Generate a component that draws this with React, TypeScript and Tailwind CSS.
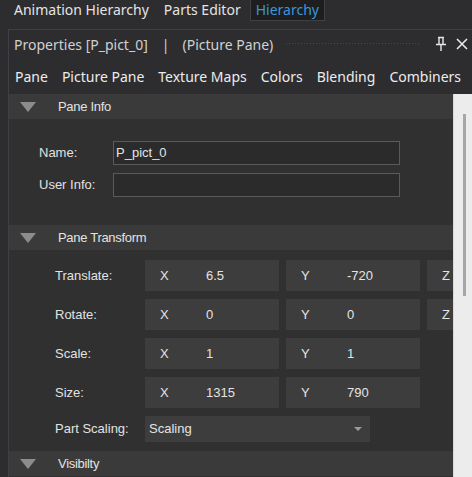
import React from "react";

const ui = "font-['Noto_Sans','Open_Sans',sans-serif]";
const form = "font-['Liberation_Sans',Arial,sans-serif]";

function SectionHeader({ title }: { title: string }) {
  return (
    <div className="flex h-[25px] shrink-0 items-center bg-[#3a3a3a]">
      <svg width="16" height="10" viewBox="0 0 16 10" className="ml-[11px] shrink-0">
        <polygon points="0,0 16,0 8,10" fill="#8c8c8c" />
      </svg>
      <span className={`${form} ml-[22px] text-[13px] tracking-[-0.3px] text-[#e2e2e2]`}>{title}</span>
    </div>
  );
}

function VecBox({ axis, value }: { axis: string; value?: string }) {
  return (
    <div className={`flex h-[31px] w-[134px] shrink-0 items-center bg-[#3d3d3d] ${form} text-[13px] text-[#e4e4e4]`}>
      <span className="ml-[15px] w-[46px]">{axis}</span>
      {value && <span>{value}</span>}
    </div>
  );
}

function VecRow({ label, x, y, z }: { label: string; x: string; y: string; z?: boolean }) {
  return (
    <div className="flex items-center">
      <span className={`${form} w-[90px] shrink-0 text-[13px] text-[#e2e2e2]`}>{label}</span>
      <div className="flex shrink-0 gap-[7px]">
        <VecBox axis="X" value={x} />
        <VecBox axis="Y" value={y} />
        {z && <VecBox axis="Z" />}
      </div>
    </div>
  );
}

export default function App() {
  return (
    <div className={`flex h-[477px] w-[472px] flex-col overflow-hidden bg-[#2d2d30] ${ui}`}>
      {/* document tabs */}
      <div className="flex h-[29px] shrink-0 items-start whitespace-nowrap text-[14px] text-[#e4e4e4]">
        <span className="ml-[14px] mt-[-1px] leading-[22px]">Animation Hierarchy</span>
        <span className="ml-[15px] mt-[-1px] leading-[22px]">Parts Editor</span>
        <div className="ml-[9px] flex h-[21px] items-center border border-t-0 border-[#3f3f46] bg-[#1e1e1e] px-[5px] text-[#3a96dd]">
          <span className="mt-[-2px]">Hierarchy</span>
        </div>
      </div>

      {/* tool window */}
      <div className="ml-[8px] flex min-h-0 flex-1 flex-col border-l border-t border-[#3f3f46] bg-[#2d2d30]">
        <div className="flex h-[28px] shrink-0 items-center whitespace-nowrap text-[14px] text-[#d0d0d0]">
          <span className="ml-[5px] shrink-0">Properties [P_pict_0]</span>
          <span className="ml-[14px] shrink-0">|</span>
          <span className="ml-[13px] shrink-0">(Picture Pane)</span>
          <div className="ml-[12px] h-[4px] min-w-0 flex-1 bg-[radial-gradient(circle,#4a4a4e_0.8px,transparent_1px)] bg-[length:3px_3px]" />
          <svg width="12" height="16" viewBox="0 0 12 16" className="ml-[15px] shrink-0">
            <path d="M3 1.5h6M4 1.5v7M8 1.5v7M1 8.5h10M6 8.5v6.5" stroke="#e8e8e8" strokeWidth="1.4" fill="none" />
          </svg>
          <svg width="12" height="12" viewBox="0 0 12 12" className="ml-[9px] mr-[4px] shrink-0">
            <path d="M1 1L11 11M11 1L1 11" stroke="#e8e8e8" strokeWidth="1.6" />
          </svg>
        </div>

        <div className="flex h-[36px] shrink-0 items-center gap-[14px] whitespace-nowrap pl-[6px] text-[14px] text-[#ececec]">
          <span>Pane</span>
          <span>Picture Pane</span>
          <span>Texture Maps</span>
          <span>Colors</span>
          <span>Blending</span>
          <span>Combiners</span>
        </div>

        <div className="flex min-h-0 flex-1">
          <div className="flex min-w-0 flex-1 flex-col overflow-hidden whitespace-nowrap bg-[#303030]">
            <SectionHeader title="Pane Info" />
            <div className="flex h-[106px] shrink-0 flex-col gap-[8px] pt-[22px]">
              <div className="flex items-center">
                <span className={`${form} ml-[30px] w-[74px] shrink-0 text-[13px] text-[#e2e2e2]`}>Name:</span>
                <div className={`flex h-[24px] w-[287px] shrink-0 items-center border border-[#5a5a5a] bg-[#2b2b2b] px-[2px] ${form} text-[13px] text-[#e4e4e4]`}>
                  P_pict_0
                </div>
              </div>
              <div className="flex items-center">
                <span className={`${form} ml-[30px] w-[74px] shrink-0 text-[13px] text-[#e2e2e2]`}>User Info:</span>
                <div className="h-[24px] w-[287px] shrink-0 border border-[#5a5a5a] bg-[#2b2b2b]" />
              </div>
            </div>

            <SectionHeader title="Pane Transform" />
            <div className="flex h-[201px] shrink-0 flex-col gap-[8px] pl-[46px] pt-[10px]">
              <VecRow label="Translate:" x="6.5" y="-720" z />
              <VecRow label="Rotate:" x="0" y="0" z />
              <VecRow label="Scale:" x="1" y="1" />
              <VecRow label="Size:" x="1315" y="790" />
              <div className="flex items-center">
                <span className={`${form} w-[90px] shrink-0 text-[13px] text-[#e2e2e2]`}>Part Scaling:</span>
                <div className={`flex h-[26px] w-[225px] shrink-0 items-center bg-[#3d3d3d] pl-[4px] pr-[8px] ${form} text-[13px] text-[#e4e4e4]`}>
                  <span className="flex-1">Scaling</span>
                  <svg width="8" height="4" viewBox="0 0 8 4">
                    <polygon points="0,0 8,0 4,4" fill="#9a9a9a" />
                  </svg>
                </div>
              </div>
            </div>

            <SectionHeader title="Visibilty" />
          </div>

          {/* scrollbar */}
          <div className="w-[19px] shrink-0 border-l border-[#d8d8d8] bg-[#ececec]">
            <div className="ml-[9px] mt-[20px] h-[182px] w-[3px] bg-[#a6a6a6]" />
          </div>
        </div>
      </div>
    </div>
  );
}
